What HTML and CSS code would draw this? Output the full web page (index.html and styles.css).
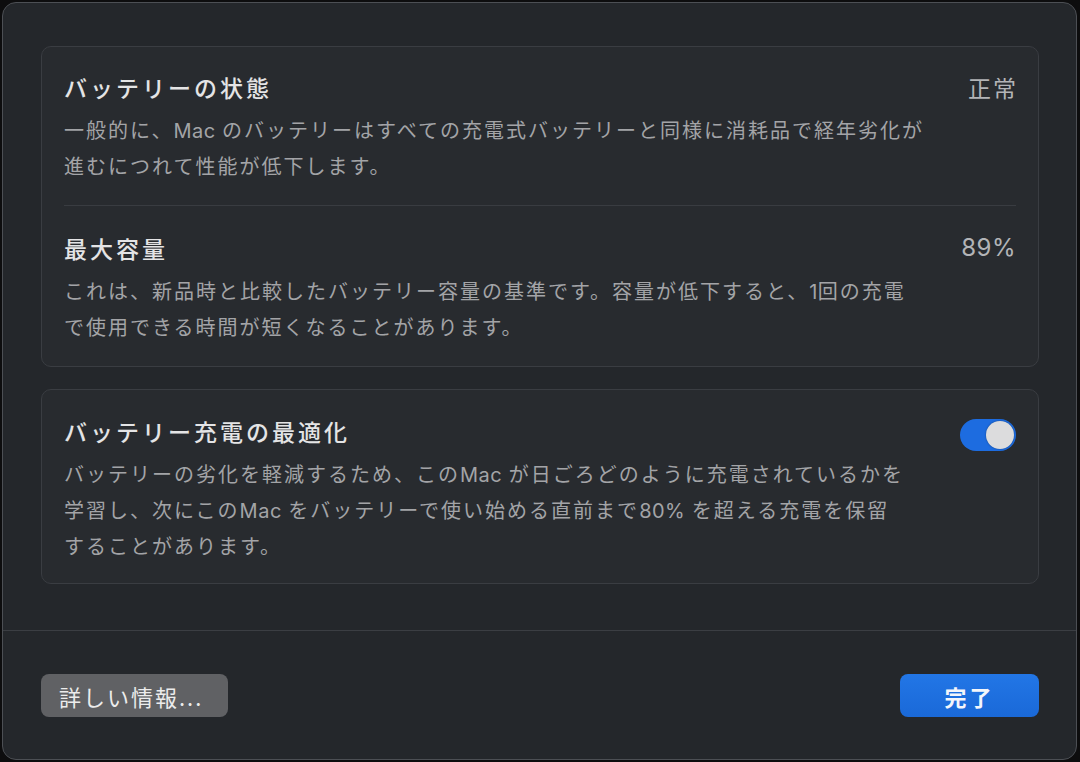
FILE: index.html
```html
<!DOCTYPE html>
<html lang="ja">
<head>
<meta charset="utf-8">
<title>バッテリー</title>
<link rel="stylesheet" href="styles.css">
</head>
<body>
<div class="window">
  <div class="content">
    <section class="card">
      <div class="row">
        <div class="text">
          <h2 class="title">バッテリーの状態</h2>
          <p class="desc">一般的に、<span class="en">Mac</span> のバッテリーはすべての充電式バッテリーと同様に消耗品で経年劣化が<br>進むにつれて性能が低下します。</p>
        </div>
        <div class="value">正常</div>
      </div>
      <div class="row">
        <div class="text">
          <h2 class="title">最大容量</h2>
          <p class="desc">これは、新品時と比較したバッテリー容量の基準です。容量が低下すると、<span class="en">1</span>回の充電<br>で使用できる時間が短くなることがあります。</p>
        </div>
        <div class="value en-value">89%</div>
      </div>
    </section>
    <section class="card card-second">
      <div class="row">
        <div class="text">
          <h2 class="title">バッテリー充電の最適化</h2>
          <p class="desc">バッテリーの劣化を軽減するため、この<span class="en">Mac</span> が日ごろどのように充電されているかを<br>学習し、次にこの<span class="en">Mac</span> をバッテリーで使い始める直前まで<span class="en">80%</span> を超える充電を保留<br>することがあります。</p>
        </div>
        <div class="toggle"><div class="knob"></div></div>
      </div>
    </section>
  </div>
  <div class="separator"></div>
  <div class="footer">
    <button class="btn btn-gray">詳しい情報...</button>
    <button class="btn btn-blue">完了</button>
  </div>
</div>
</body>
</html>
```

FILE: styles.css
```css
* { box-sizing: border-box; }

html, body {
  margin: 0;
  padding: 0;
  background: #0d0d0e;
}

body {
  width: 1080px;
  height: 762px;
  padding: 2px 3px 2px 2px;
  font-family: "Noto Sans CJK JP", "Noto Sans", sans-serif;
}

.window {
  height: 758px;
  background: #24272b;
  border: 1px solid #4c4f54;
  border-radius: 14px;
  display: flex;
  flex-direction: column;
  overflow: hidden;
}

.content {
  padding: 43px 37px 0 38px;
  display: flex;
  flex-direction: column;
  gap: 22px;
}

.card {
  background: #282b2f;
  border: 1px solid #3a3d42;
  border-radius: 10px;
  padding: 0 22px;
}

.row {
  display: flex;
  justify-content: space-between;
  align-items: flex-start;
  padding: 25px 0 21px;
}

.row + .row {
  border-top: 1px solid #393c41;
  padding-top: 27px;
  padding-bottom: 21px;
}

.card-second .row {
  padding: 26px 0 19px;
}

.title {
  margin: 0;
  font-size: 23px;
  line-height: 30px;
  font-weight: 500;
  letter-spacing: 3px;
  color: #e4e4e5;
}

.desc {
  margin: 10px 0 0;
  font-size: 20px;
  line-height: 36px;
  letter-spacing: 2px;
  color: #a3a4a7;
  white-space: nowrap;
}

.en {
  font-family: "Inter", "Noto Sans", sans-serif;
  font-size: 20px;
  line-height: 1;
  letter-spacing: 0.5px;
}

.value {
  font-size: 23px;
  line-height: 30px;
  letter-spacing: 2px;
  margin-right: -2px;
  color: #b3b4b7;
}

.en-value {
  font-family: "Inter", "Noto Sans", sans-serif;
  font-size: 24px;
  letter-spacing: 0.5px;
  margin-right: 0;
}

.toggle {
  margin-top: 3px;
  width: 56px;
  height: 32px;
  border-radius: 16px;
  background: #1d6ce0;
  display: flex;
  justify-content: flex-end;
  align-items: center;
  padding: 2px;
}

.knob {
  width: 28px;
  height: 28px;
  border-radius: 50%;
  background: #dcdcdd;
  box-shadow: 0 0 2px rgba(0,0,0,0.4);
}

.separator {
  margin-top: 46px;
  height: 1px;
  background: #3b3e43;
}

.footer {
  display: flex;
  justify-content: space-between;
  padding: 43px 37px 0 38px;
}

.btn {
  height: 43px;
  border: none;
  border-radius: 8px;
  font-family: "Noto Sans CJK JP", "Noto Sans", sans-serif;
  font-size: 22px;
  color: #ececec;
  padding: 0 18px;
  cursor: default;
}

.btn-gray {
  width: 187px;
  background: #606164;
  letter-spacing: 2px;
  text-align: left;
}

.btn-blue {
  width: 139px;
  background: linear-gradient(#2276e6, #1a69d8);
  color: #f4f6fb;
  font-weight: 700;
  letter-spacing: 3px;
  text-align: center;
}
```
